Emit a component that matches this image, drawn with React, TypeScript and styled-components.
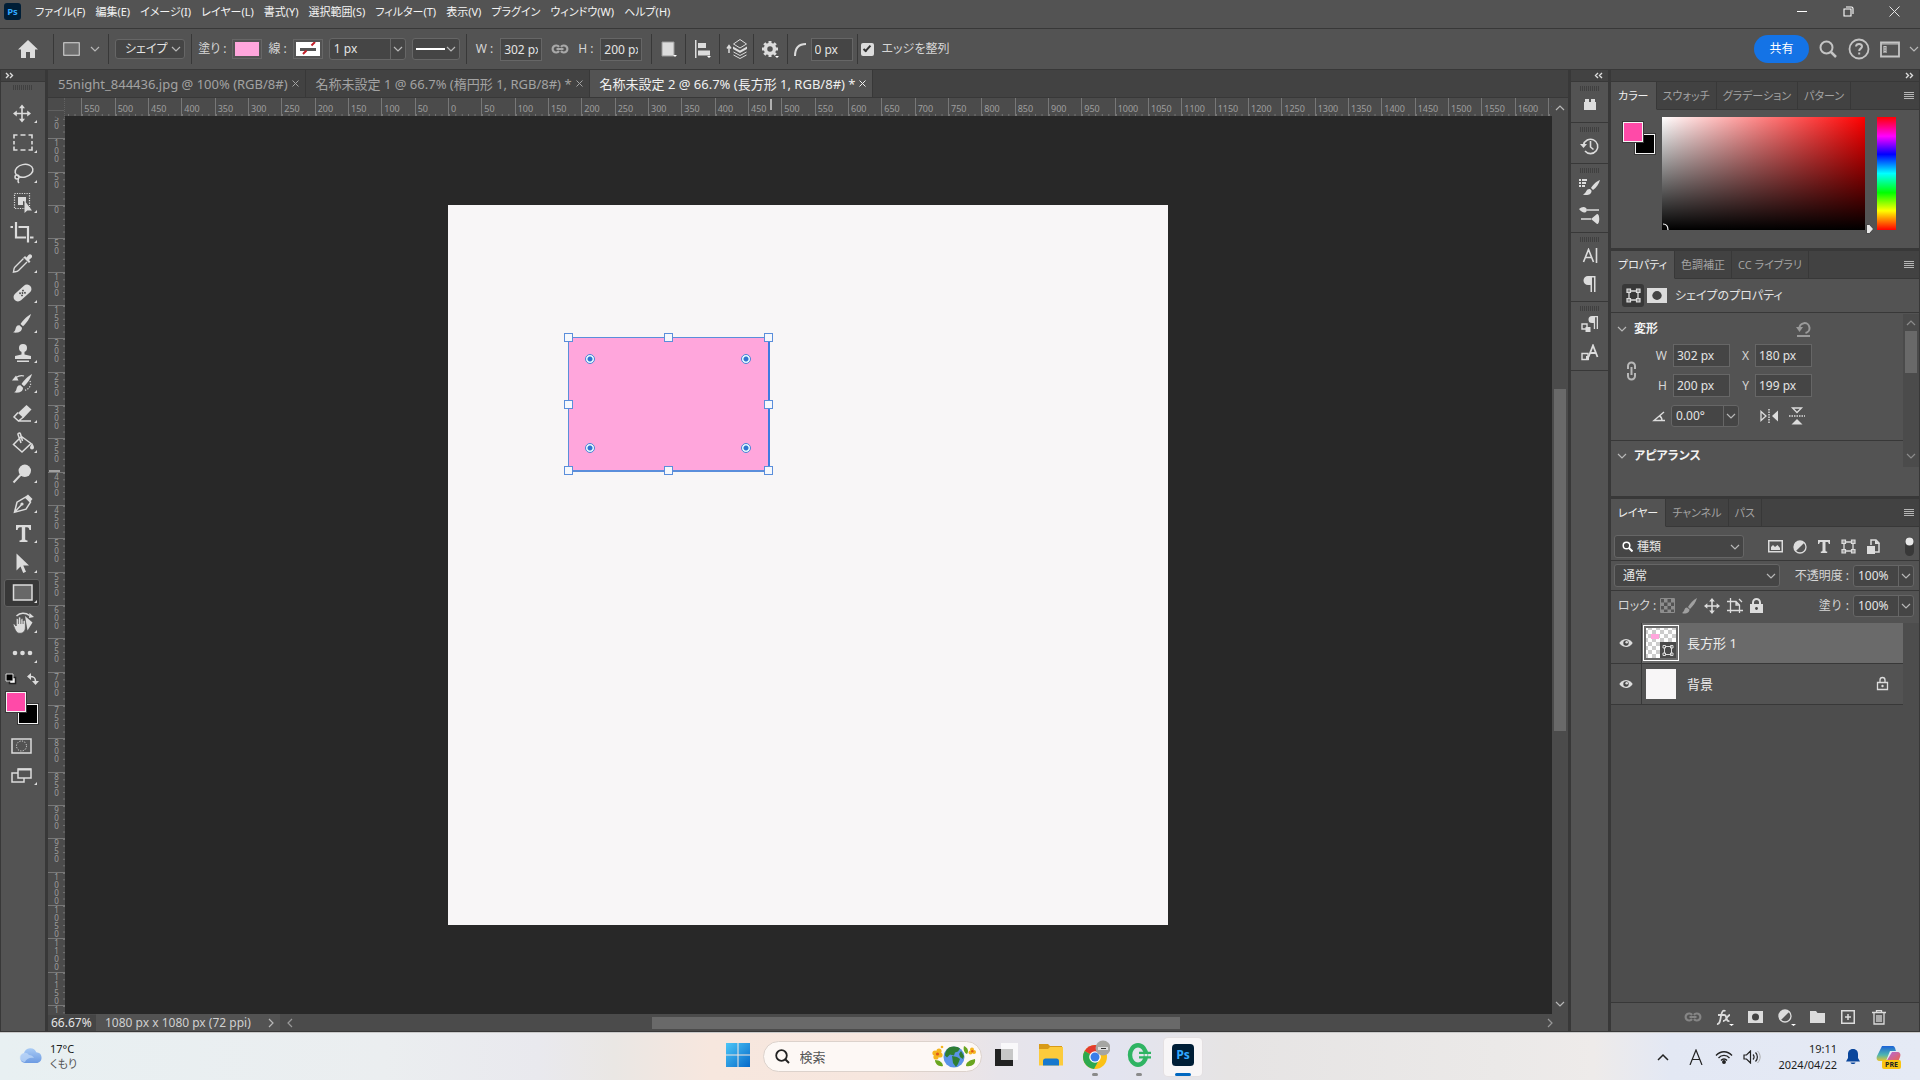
import React from "react";
import styled, { createGlobalStyle, css } from "styled-components";

const c = {
  panel: "#535353",
  dark: "#424242",
  line: "#383838",
  field: "#454545",
  edge: "#666666",
  text: "#e4e4e4",
  dim: "#a3a3a3",
  icon: "#dcdcdc",
  canvas: "#282828",
  track: "#4b4b4b",
  thumb: "#696969",
};

const Global = createGlobalStyle`
  *, *::before, *::after { box-sizing: border-box; }
  body {
    margin: 0;
    overflow: hidden;
    background: ${c.line};
    color: ${c.text};
    font: 12px/16px "Noto Sans", "Noto Sans CJK JP", sans-serif;
    font-feature-settings: "palt";
  }
  button, input, select { font: inherit; font-feature-settings: inherit; color: inherit; margin: 0; }
  button { border: 0; padding: 0; background: none; cursor: pointer; }
  svg { display: block; flex: none; }
`;

/* ---------- frame ---------- */

const Page = styled.div`
  display: grid;
  grid-template-rows: 28px 41px minmax(0, 1fr) 48px;
  height: 100vh;
`;

const MenuBar = styled.header`
  display: flex;
  align-items: center;
  background: ${c.panel};
  padding: 0 14px 5px 4px;
`;

const Menus = styled.nav`
  display: flex;
  gap: 10px;
  margin-left: 14px;
  flex: 1;
`;

const MenuItem = styled.button`
  white-space: nowrap;
  font-size: 11px;
  color: #f4f4f4;
`;

const WindowButtons = styled.div`
  display: flex;
  gap: 22px;
`;

const WindowButton = styled.button`
  width: 24px;
  height: 20px;
  display: grid;
  place-items: center;
`;

const OptionsBar = styled.div`
  display: flex;
  align-items: center;
  border-top: 1px solid ${c.line};
  background: ${c.panel};
  padding: 0 1px 0 3px;
  white-space: nowrap;
`;

const Group = styled.div<{ $w: number; $gap?: number }>`
  display: flex;
  align-items: center;
  justify-content: center;
  gap: ${(p) => p.$gap ?? 6}px;
  width: ${(p) => p.$w}px;
  height: 30px;
  flex: none;
  border-right: 1px solid ${c.line};
`;

const LastGroup = styled(Group)`
  border-right: 0;
`;

const Spacer = styled.div`
  flex: 1;
`;

const IconButton = styled.button<{ $w?: number; $h?: number }>`
  display: grid;
  place-items: center;
  width: ${(p) => p.$w ?? 20}px;
  height: ${(p) => p.$h ?? 20}px;
  flex: none;
`;

const fieldBox = css`
  background: ${c.field};
  border: 1px solid ${c.edge};
  color: ${c.text};
`;

const TextField = styled.input<{ $w: number }>`
  ${fieldBox}
  width: ${(p) => p.$w}px;
  height: 23px;
  padding: 0 3px;
  font-size: 12px;
  outline: 0;
`;

const Label = styled.label`
  color: #d6d6d6;
  white-space: nowrap;
`;

const WideLabel = styled(Label)`
  font-feature-settings: normal;
`;

const LockLabel = styled.span`
  padding-left: 4px;
  color: #d6d6d6;
  white-space: nowrap;
`;

const SelectWrap = styled.span<{ $w: number; $h: number }>`
  display: grid;
  align-items: center;
  width: ${(p) => p.$w}px;
  height: ${(p) => p.$h}px;
  flex: none;
  > * { grid-area: 1 / 1; }
  > svg { justify-self: end; margin-right: 4px; pointer-events: none; }
  > svg.lead { justify-self: start; margin-left: 8px; }
  > svg.line { justify-self: start; margin-left: 4px; }
`;

const SelectField = styled.select<{ $pad: number }>`
  ${fieldBox}
  appearance: none;
  width: 100%;
  height: 100%;
  border-radius: 3px;
  padding: 0 16px 0 ${(p) => p.$pad}px;
  outline: 0;
`;

const Combo = styled.span<{ $w: number }>`
  ${fieldBox}
  display: flex;
  width: ${(p) => p.$w}px;
  height: 22px;
  border-radius: 3px;
  flex: none;
  input {
    flex: 1;
    min-width: 0;
    background: none;
    border: 0;
    outline: 0;
    padding: 0 4px;
  }
  button {
    width: 15px;
    display: grid;
    place-items: center;
    border-left: 1px solid ${c.edge};
  }
`;

const Swatch = styled.button<{ $color: string }>`
  width: 30px;
  height: 20px;
  border: 1px solid ${c.edge};
  padding: 2px 2px;
  background: ${(p) => p.$color};
  background-clip: content-box;
  svg { width: 100%; height: 100%; }
`;

const Check = styled.input`
  appearance: none;
  width: 13px;
  height: 13px;
  border-radius: 2px;
  background: ${c.icon};
  display: grid;
  place-items: center;
  &:checked::after {
    content: "";
    width: 4px;
    height: 8px;
    border: solid #333;
    border-width: 0 2px 2px 0;
    transform: translateY(-1px) rotate(42deg);
  }
`;

const Share = styled.button`
  width: 55px;
  height: 28px;
  border-radius: 14px;
  background: #1473e6;
  color: #fff;
`;

const RightTools = styled.div`
  display: flex;
  align-items: center;
  gap: 8px;
`;

const Workspace = styled.main`
  display: grid;
  grid-template-columns: 45px minmax(0, 1fr) 37px 308px;
  gap: 3px;
  padding: 1px 1px 1px 0;
  background: ${c.line};
  min-height: 0;
`;

/* ---------- tools ---------- */

const Tools = styled.aside`
  display: flex;
  flex-direction: column;
  align-items: center;
  background: ${c.panel};
  border-left: 1px solid ${c.line};
  min-height: 0;
`;

const Strip = styled.div<{ $end?: boolean }>`
  width: 100%;
  height: 12px;
  flex: none;
  display: flex;
  align-items: center;
  justify-content: ${(p) => (p.$end ? "flex-end" : "flex-start")};
  padding: 0 5px 0 4px;
  background: ${c.dark};
  border-bottom: 1px solid ${c.line};
`;

const Grip = styled.div`
  width: 20px;
  height: 5px;
  margin: 3px auto 0;
  flex: none;
  background: repeating-linear-gradient(90deg, #404040 0 1px, transparent 1px 2px);
`;

const ToolBody = styled.div`
  display: flex;
  flex-direction: column;
  align-items: center;
  padding-right: 2px;
`;

const ToolList = styled.div`
  display: flex;
  flex-direction: column;
  gap: 2px;
  margin: 9px 0 6px;
`;

const ToolButton = styled.button<{ $on?: boolean }>`
  width: 36px;
  height: 28px;
  border-radius: 3px;
  ${(p) => p.$on && css`background: #383838; box-shadow: inset 0 0 0 1px #626262;`}
`;

const ColourPair = styled.div`
  display: grid;
  grid-template-columns: repeat(34, 1px);
  grid-template-rows: repeat(34, 1px);
  margin: 6px 0 4px;
`;

const Chip = styled.button<{ $color: string; $back?: boolean }>`
  grid-area: ${(p) => (p.$back ? "13 / 13 / 35 / 35" : "1 / 1 / 23 / 23")};
  width: 22px;
  height: 22px;
  background: ${(p) => p.$color};
  border: 1px solid ${c.line};
  box-shadow: inset 0 0 0 1px #f4f4f4;
`;

const MiniRow = styled.div`
  display: flex;
  justify-content: space-between;
  width: 34px;
`;

/* ---------- document ---------- */

const Doc = styled.section`
  display: grid;
  grid-template-rows: 28px 18px minmax(0, 1fr) 17px;
  min-width: 0;
  min-height: 0;
  background: ${c.dark};
`;

const DocTabs = styled.div`
  display: flex;
  border-bottom: 1px solid ${c.line};
`;

const DocTab = styled.div<{ $on?: boolean }>`
  display: flex;
  align-items: center;
  gap: 4px;
  padding: 0 6px 0 10px;
  white-space: nowrap;
  border-right: 1px solid ${c.line};
  color: ${(p) => (p.$on ? "#f0f0f0" : c.dim)};
  background: ${(p) => (p.$on ? c.panel : "transparent")};
  > button:first-child { font-size: 13px; }
`;

const RulerRow = styled.div`
  display: grid;
  grid-template-columns: 17px minmax(0, 1fr) 16px;
  background: ${c.track};
`;

const Corner = styled.div`
  border-right: 1px dotted #6a6a6a;
  background: linear-gradient(#6a6a6a, #6a6a6a) 0 12px / 100% 1px no-repeat, ${c.track};
  opacity: 0.7;
`;

const RulerWindow = styled.div`
  overflow: hidden;
  min-height: 0;
  background: ${c.track};
  color: #9e9e9e;
  font-size: 9px;
  font-feature-settings: normal;
`;

const HScale = styled.div`
  display: grid;
  grid-template-columns: repeat(48, 1fr);
  width: 1600px;
  height: 18px;
  margin-left: -17px;
`;

const HCell = styled.span<{ $mark?: boolean }>`
  border-left: 1px solid #777;
  padding: 5px 0 0 2px;
  line-height: 12px;
  background: ${(p) => p.$mark && "linear-gradient(#b0b0b0, #b0b0b0) 21px 1px / 2px 11px no-repeat,"}
    linear-gradient(90deg, #777 1px, transparent 1px) 0 100% / 20% 2px repeat-x;
`;

const VScale = styled.div`
  display: grid;
  grid-template-rows: repeat(30, 1fr);
  height: 1000px;
  margin-top: -11px;
`;

const VCell = styled.span<{ $mark?: boolean }>`
  border-top: 1px solid #777;
  display: flex;
  flex-direction: column;
  align-items: center;
  line-height: 8px;
  font-size: 8px;
  overflow: hidden;
  background: ${(p) => p.$mark && "linear-gradient(#a0a0a0, #a0a0a0) 1px 31px / 11px 2px no-repeat,"}
    linear-gradient(#777 1px, transparent 1px) 100% 0 / 2px 20% repeat-y;
`;

const Stage = styled.div`
  display: grid;
  grid-template-columns: 17px minmax(0, 1fr) 16px;
  min-height: 0;
`;

const Canvas = styled.div`
  display: grid;
  place-items: center;
  padding-right: 1px;
  background: ${c.canvas};
  overflow: hidden;
`;

const Artboard = styled.div`
  position: relative;
  width: 720px;
  height: 720px;
  background: #f8f6f7;
`;

const Shape = styled.div`
  position: absolute;
  left: 120px;
  top: 132px;
  width: 200px;
  height: 133px;
  background: #ffa6dc;
  box-shadow: inset 1px 1px #5b8edb, 2px 0 #3f7be0, 0 2px #5b8edb, 2px 2px #3f7be0;
`;

const Handle = styled.span<{ $x: number; $y: number }>`
  position: absolute;
  left: ${(p) => p.$x}%;
  top: ${(p) => p.$y}%;
  width: 9px;
  height: 9px;
  margin: -4px;
  background: #f6f8fc;
  border: 1px solid #5b8edb;
`;

const Dot = styled.span<{ $x: string; $y: string }>`
  position: absolute;
  ${(p) => p.$x}: 17px;
  ${(p) => p.$y}: 17px;
  width: 10px;
  height: 10px;
  border-radius: 50%;
  border: 1px solid #4a86d8;
  background: radial-gradient(circle, #2f74cf 0 2px, #e9fbff 3px);
`;

const VBar = styled.div`
  display: flex;
  flex-direction: column;
  align-items: center;
  background: ${c.track};
  padding: 5px 0;
`;

const VThumb = styled.div`
  width: 12px;
  flex: 342;
  background: ${c.thumb};
`;

const VGap = styled.div`
  flex: 268;
`;

const Status = styled.footer`
  display: flex;
  align-items: center;
  background: ${c.track};
  white-space: nowrap;
`;

const Zoom = styled.input`
  width: 48px;
  height: 16px;
  border: 0;
  outline: 0;
  padding: 0 0 0 3px;
  background: ${c.field};
`;

const DocInfo = styled.div`
  display: flex;
  align-items: center;
  justify-content: space-between;
  width: 184px;
  height: 17px;
  padding: 0 4px 0 9px;
  background: ${c.panel};
  color: #d0d0d0;
`;

const HBar = styled.div`
  flex: 1;
  display: grid;
  grid-template-columns: 15px 352fr 527fr 352fr 36px;
  align-items: center;
  padding-left: 5px;
  svg:last-child { justify-self: center; }
`;

const HThumb = styled.div`
  grid-column: 3;
  height: 12px;
  background: ${c.thumb};
`;

/* ---------- dock ---------- */

const Dock = styled.aside`
  background: ${c.panel};
  min-height: 0;
`;

const DockGroup = styled.div`
  border-bottom: 1px solid ${c.line};
  padding: 1px 0 3px;
  button { width: 37px; height: 28px; display: grid; place-items: center; }
`;

/* ---------- panels ---------- */

const Panels = styled.aside`
  display: flex;
  flex-direction: column;
  min-height: 0;
  background: ${c.line};
`;

const Panel = styled.section<{ $h?: number }>`
  display: flex;
  flex-direction: column;
  background: ${c.panel};
  margin-bottom: 3px;
  min-height: 0;
  ${(p) => (p.$h ? css`height: ${p.$h}px; flex: none;` : css`flex: 1; margin-bottom: 0;`)}
`;

const PanelTabs = styled.div`
  display: flex;
  height: 28px;
  flex: none;
  background: ${c.dark};
`;

const PanelTab = styled.button<{ $on?: boolean }>`
  padding: 0 ${(p) => (p.$on ? 7 : 6)}px;
  font-size: 11px;
  white-space: nowrap;
  border-right: 1px solid ${c.line};
  border-bottom: 1px solid ${(p) => (p.$on ? c.panel : c.line)};
  background: ${(p) => (p.$on ? c.panel : "transparent")};
  color: ${(p) => (p.$on ? "#efefef" : c.dim)};
`;

const TabRest = styled.div`
  flex: 1;
  display: flex;
  align-items: center;
  justify-content: flex-end;
  padding-right: 5px;
  border-bottom: 1px solid ${c.line};
`;

const ColourBody = styled.div`
  display: grid;
  grid-template-columns: 34px 203px 1fr 19px;
  column-gap: 3px;
  padding: 7px 23px 0 11px;
  align-items: start;
  ${ColourPair} { margin: 4px 0 0; }
`;

const Field = styled.div`
  margin-left: 3px;
  width: 203px;
  height: 113px;
  background: linear-gradient(to top, #000, transparent), linear-gradient(to right, #fff, #f00);
  display: flex;
  align-items: flex-end;
`;

const Hue = styled.div`
  height: 113px;
  width: 19px;
  background: linear-gradient(#f00, #f0f 17%, #00f 33%, #0ff 50%, #0f0 67%, #ff0 83%, #f00);
`;

const HuePointer = styled.div`
  align-self: end;
  justify-self: end;
  margin-bottom: -4px;
`;

const PropHead = styled.div`
  display: flex;
  align-items: center;
  gap: 3px;
  height: 34px;
  padding-left: 11px;
  border-bottom: 1px solid ${c.line};
  color: ${c.text};
  span { margin-left: 5px; }
`;

const Pressed = styled.button`
  width: 22px;
  height: 23px;
  border-radius: 3px;
  background: #383838;
  display: grid;
  place-items: center;
`;

const PropBody = styled.div`
  display: grid;
  grid-template-columns: minmax(0, 1fr) 16px;
  flex: 1;
  padding-top: 1px;
`;

const Section = styled.div`
  border-bottom: 1px solid ${c.line};
  height: 127px;
`;

const Heading = styled.h3`
  display: flex;
  align-items: center;
  gap: 7px;
  margin: 0;
  height: 30px;
  padding: 0 92px 0 6px;
  font-size: 12px;
  font-weight: 700;
  color: #f2f2f2;
  svg:last-child:not(:first-child) { margin-left: auto; }
`;

const TransformGrid = styled.div`
  display: grid;
  grid-template-columns: 20px 15px 57px 13px 57px;
  grid-template-rows: 23px 23px 24px;
  column-gap: 6px;
  row-gap: 7px;
  padding-left: 15px;
  align-items: center;
  label { text-align: right; }
  > button { grid-row: 1 / 3; }
`;

const AngleRow = styled.div`
  grid-column: 2 / 6;
  display: flex;
  align-items: center;
  gap: 5px;
  padding-right: 5px;
  button + button { margin-left: 3px; }
`;

const PropScroll = styled.div`
  height: 153px;
  display: flex;
  flex-direction: column;
  align-items: center;
  background: ${c.track};
  padding: 4px 0 6px;
  div { width: 12px; height: 42px; background: ${c.thumb}; margin: 3px 0 auto; }
`;

const LayerRow = styled.div<{ $h: number }>`
  display: flex;
  align-items: center;
  height: ${(p) => p.$h}px;
  padding: 0 5px 0 3px;
  gap: 4px;
  flex: none;
`;

const FilterRow = styled(LayerRow)`
  padding-top: 6px;
`;

const BlendRow = styled(LayerRow)`
  border-top: 1px solid ${c.line};
`;

const LockRow = styled(LayerRow)`
  border-top: 1px solid ${c.line};
  padding-bottom: 3px;
`;

const IconRow = styled.div<{ $gap: number }>`
  display: flex;
  align-items: center;
  gap: ${(p) => p.$gap}px;
`;

const LayerList = styled.ul`
  list-style: none;
  margin: 0;
  padding: 0 16px 0 0;
  flex: 1;
  background: #4d4d4d;
  border-bottom: 1px solid ${c.line};
`;

const Layer = styled.li<{ $on?: boolean }>`
  display: grid;
  grid-template-columns: 30px minmax(0, 1fr);
  height: 41px;
  border-bottom: 1px solid ${c.line};
  background: ${c.panel};
  > div {
    display: flex;
    align-items: center;
    gap: 8px;
    padding-left: 1px;
    border-left: 1px solid ${c.line};
    background: ${(p) => (p.$on ? "#6a6a6a" : c.panel)};
    color: #ececec;
    font-size: 13px;
  }
  > div > svg { margin: 0 13px 0 auto; }
  > button { display: grid; place-items: center; }
`;

const Thumb = styled.span<{ $on?: boolean }>`
  display: flex;
  align-items: flex-end;
  justify-content: flex-end;
  width: 36px;
  height: 36px;
  flex: none;
  padding: 2px;
  border: 1px solid ${(p) => (p.$on ? "#fff" : "transparent")};
  background-clip: content-box;
  background-color: #f8f6f7;
  ${(p) => p.$on && css`
    background-image: linear-gradient(#ffa6dc, #ffa6dc), conic-gradient(#ccc 25%, #fff 0 50%, #ccc 0 75%, #fff 0);
    background-size: 8px 5px, 8px 8px;
    background-position: 7px 8px, 0 0;
    background-repeat: no-repeat, repeat;
  `}
`;

const PanelFoot = styled.footer`
  display: flex;
  align-items: center;
  justify-content: flex-end;
  gap: 11px;
  height: 28px;
  padding-right: 30px;
  flex: none;
`;

/* ---------- taskbar ---------- */

const Taskbar = styled.footer`
  display: grid;
  grid-template-columns: 1fr auto 1fr;
  align-items: center;
  color: #1c1c1c;
  border-top: 1px solid #c9c9c9;
  background: linear-gradient(90deg, #e8f0f2 0, #ebeef0 20%, #e9e9ee 28%, #eae7e4 32%, #f7e7de 37%, #f6e6de 46%, #e7e4ea 52%, #e3e4f0 58%, #e6e4e4 64%, #ebe9e8 78%, #eeebea 83%, #e3e8f4 87%, #e5eaf5 100%);
`;

const Weather = styled.button`
  display: flex;
  align-items: center;
  gap: 7px;
  padding: 0 0 2px 19px;
  text-align: left;
  font-size: 11px;
  line-height: 15px;
  small { display: block; font-size: 11px; color: #555; }
`;

const Apps = styled.div`
  display: flex;
  align-items: center;
  gap: 6px;
`;

const AppButton = styled.button<{ $on?: boolean }>`
  display: grid;
  grid-template-rows: 1fr 3px;
  place-items: center;
  width: 38px;
  height: 38px;
  border-radius: 4px;
  ${(p) => p.$on && css`background: #f8f6f7; box-shadow: 0 0 0 1px #e4e0e2;`}
`;

const Running = styled.i<{ $on?: boolean }>`
  width: ${(p) => (p.$on ? 16 : 6)}px;
  height: 3px;
  border-radius: 2px;
  background: ${(p) => (p.$on ? "#0067c0" : "#8a8a8a")};
`;

const Search = styled.label`
  display: flex;
  align-items: center;
  gap: 10px;
  width: 219px;
  height: 31px;
  padding: 0 5px 0 11px;
  border: 1px solid #dcd2cc;
  border-radius: 16px;
  background: #fdf8f5;
  input { flex: 1; min-width: 0; border: 0; outline: 0; background: none; padding: 0; font-size: 13px; }
  input::placeholder { color: #555; opacity: 1; }
`;

const Tray = styled.div`
  display: flex;
  align-items: center;
  justify-content: flex-end;
  padding-right: 18px;
  gap: 8px;
  > button:first-child { margin-right: 8px; }
  > button:last-child { margin-left: 7px; }
`;

const Clock = styled.time`
  text-align: right;
  font-size: 11px;
  line-height: 16px;
  margin-left: 8px;
`;

/* ---------- icons ---------- */

type Ic = { w: number; h: number; children: React.ReactNode; className?: string; stroke?: boolean; color?: string };
const Svg = ({ w, h, children, className, stroke, color = c.icon }: Ic) => (
  <svg
    width={w}
    height={h}
    viewBox={`0 0 ${w} ${h}`}
    className={className}
    fill={stroke ? "none" : color}
    stroke={stroke ? color : "none"}
    strokeWidth={stroke ? 1.5 : undefined}
    aria-hidden="true"
  >
    {children}
  </svg>
);

const Chevron = ({ dir = "down", color = "#b8b8b8" }: { dir?: "down" | "up" | "left" | "right"; color?: string }) => {
  const d = { down: "M1 3l4 4 4-4", up: "M1 7l4-4 4 4", left: "M7 1L3 5l4 4", right: "M3 1l4 4-4 4" }[dir];
  return <Svg w={10} h={10} stroke color={color}><path d={d} strokeWidth="1.2" /></Svg>;
};

const Doubles = ({ left }: { left?: boolean }) => (
  <Svg w={9} h={7} stroke><path strokeWidth="1.4" d={left ? "M4 1L1.500 3.500 4 6M8 1L5.500 3.500 8 6" : "M1 1l2.500 2.500L1 6M5 1l2.500 2.500L5 6"} /></Svg>
);

const Burger = () => <Svg w={10} h={8}><path d="M0 0h10v1H0zM0 2h10v1H0zM0 4h10v1H0zM0 6h10v1H0z" fill="#b5b5b5" /></Svg>;

const Link = ({ color = "#a8a8a8" }: { color?: string }) => (
  <Svg w={18} h={12} stroke color={color}>
    <path strokeWidth="2.2" d="M8 4a3.500 3.500 0 1 0 0 4M10 4a3.500 3.500 0 1 1 0 4M5.500 6h7" />
  </Svg>
);

const Close = ({ s = 7 }: { s?: number }) => (
  <Svg w={s} h={s} stroke color="currentColor"><path strokeWidth="1" d={`M.5 .5L${s - 0.5} ${s - 0.5}M${s - 0.5} .5L.5 ${s - 0.5}`} /></Svg>
);

const MoveIcon = ({ s = 16 }: { s?: number }) => (
  <svg width={s} height={s} viewBox="0 0 18 18" fill={c.icon} aria-hidden="true">
    <path d="M9 0l3.200 3.800H9.900v4.300h4.300V5.800L18 9l-3.800 3.200V9.900H9.900v4.300h2.300L9 18l-3.200-3.800h2.300V9.900H3.800v2.300L0 9l3.800-3.200v2.300h4.300V3.800H5.800z" />
  </svg>
);

const PathBox = ({ s = 15 }: { s?: number }) => (
  <svg width={s} height={s} viewBox="0 0 15 15" fill="none" stroke={c.icon} aria-hidden="true">
    <path strokeWidth="1.300" d="M3 4.500v6M12 4.500v6M4.500 3h6M4.500 12h6" />
    <path strokeWidth="1.200" fill={c.icon} fillOpacity=".55" d="M1 1h3.500v3.500H1zM10.500 1H14v3.500h-3.500zM1 10.500h3.500V14H1zM10.500 10.500H14V14h-3.500z" />
  </svg>
);

const MaskIcon = ({ w = 15 }: { w?: number }) => (
  <svg width={w} height={w === 20 ? 15 : 12} viewBox="0 0 20 16" preserveAspectRatio="none" aria-hidden="true">
    <path fill={c.icon} d="M0 0h20v16H0z" /><circle cx="10" cy="8" r="4.700" fill="#444" />
  </svg>
);

const HalfCircle = () => (
  <Svg w={14} h={14}><circle cx="7" cy="7" r="6" fill="none" stroke={c.icon} strokeWidth="1.300" /><path d="M11.300 2.700A6 6 0 0 0 2.700 11.300z" /></Svg>
);

const BrushShape = () => (
  <>
    <path d="M27 5c-3 1.500-8 6-10.500 10l2.500 2.300C22.500 14 26 9 27 5z" />
    <path d="M15.500 16.200c-3-.2-3.600 1.800-4 3.800-.3 1.600-1 2.600-2.500 3.300 3.500 1 9 .3 9-4.500z" />
  </>
);

const toolArt: [string, React.ReactNode][] = [
  ["移動", <g transform="translate(9 5.500)"><path d="M9 0l3 3.800H9.800v4.400h4.400V6L18 9l-3.800 3V9.800H9.800v4.400H12L9 18l-3-3.800h2.200V9.800H3.800V12L0 9l3.800-3v2.200h4.400V3.800H6z" /></g>],
  ["選択", <path fill="none" stroke={c.icon} strokeWidth="1.600" d="M10 9.500V6h3.500M16.500 6h5M24.500 6H28v3.500M28 12v3.500M28 17.500V21h-3.500M21.500 21h-5M13.500 21H10v-3.500M10 15.500V12" />],
  ["なげなわ", <g fill="none" stroke={c.icon} strokeWidth="1.500"><ellipse cx="20" cy="11.800" rx="9" ry="6.300" transform="rotate(-12 20 11.800)" /><circle cx="13" cy="18" r="2" /><path d="M14 19c1.500 1.500-1.500 2.500 1 5" /></g>],
  ["オブジェクト選択", <><path fill="none" stroke={c.icon} strokeWidth="1.200" strokeDasharray="1.200 1.200" d="M10.500 4.500h15v15h-15z" /><path d="M14 8h8v5l-3-1v4h-5z" /><path d="M20.500 11.500V24l2.800-2.600H28z" /></>],
  ["切り抜き", <path fill="none" stroke={c.icon} strokeWidth="2.200" d="M12 3v15.500h10M26 18.500h3.500M6.500 8H9M14.500 8H24v15.500" />],
  ["スポイト", <><path d="M20 8l1-1 1.500 1.500 2-2.500c2-2 4.800.8 3 2.800l-2.500 2.200L26.500 12.500l-1.500 1.500-6-6z" /><path fill="none" stroke={c.icon} strokeWidth="1.400" d="M19.500 9.500l-8.500 8.500c-1.500 1.500-1 3-1.500 5 2-.5 3.500 0 5-1.500l8.500-8.500" /></>],
  ["修復ブラシ", <g transform="rotate(-42 18.500 14)"><rect x="8" y="9.500" width="21" height="9" rx="4.500" /><g fill="#444"><circle cx="16.500" cy="12.500" r=".9" /><circle cx="20.500" cy="12.500" r=".9" /><circle cx="16.500" cy="15.500" r=".9" /><circle cx="20.500" cy="15.500" r=".9" /><circle cx="18.500" cy="14" r=".9" /></g></g>],
  ["ブラシ", <BrushShape />],
  ["スタンプ", <><circle cx="19" cy="9" r="4" /><path d="M17.500 11h3v4.500l6.500 1.500v3H11v-3l6.500-1.500zM13 21.500h12v1.500H13z" /></>],
  ["ヒストリーブラシ", <><g transform="translate(1 0)"><BrushShape /></g><path d="M8 11.500l4-5 2.500 5z" /><path fill="none" stroke={c.icon} strokeWidth="1.200" d="M12 8.500c3-2 5-2.500 8-1.500" /><path fill="none" stroke={c.icon} strokeWidth="1.200" strokeDasharray="1.200 1.500" d="M26 12c2 4-1 9-6.500 9.500" /></>],
  ["消しゴム", <><path d="M22.500 6l5 4.500-8 8.500-5.500-5z" /><path fill="none" stroke={c.icon} strokeWidth="1.500" d="M14 13.500L10 18l4.500 4 5-4M14.500 22H27" /></>],
  ["塗りつぶし", <><path fill="none" stroke={c.icon} strokeWidth="1.500" d="M17.500 7.500l9.500 7-9 8.500-8.500-7.500zM17 14L14 5.500c-.5-1.500 2-2 2.500-.5l2 7" /><path d="M28 14c1.500 2.500 2 3.500 2 4.500a2 2 0 0 1-4 0c0-1 1-2.500 2-4.500z" /></>],
  ["覆い焼き", <><circle cx="20.800" cy="11.800" r="6.200" /><path fill="none" stroke={c.icon} strokeWidth="2" d="M17 15.500L9.500 23.500" /></>],
  ["ペン", <><path fill="none" stroke={c.icon} strokeWidth="1.500" d="M10.500 23.200l2.500-10 8.500-5 5 5-4.500 7zM10.500 23.200l7-7.500" /><circle cx="18" cy="15" r="1.600" /><path d="M21.500 7.500L24 5.500l4.500 4.500-2.500 3z" /></>],
  ["文字", <path d="M12 6h15v5h-1.600c-.3-2-.8-2.800-2.400-2.800h-1.800v11.600c0 1.200.4 1.600 2.300 1.700V23h-8v-1.500c1.900-.1 2.300-.5 2.300-1.700V8.200H16c-1.600 0-2.100.8-2.400 2.800H12z" />],
  ["パス選択", <path d="M12.500 4.500v17l4-4 2.700 6.500 2.800-1.200-2.700-6.300H25z" />],
  ["長方形", <rect x="9.500" y="6" width="18.500" height="15" fill="#686868" stroke={c.icon} strokeWidth="1.500" />],
  ["ビュー回転", <><path d="M21 7l7.500 6.500-5 8z" /><path d="M25 9l5-1-4.500-4z" /><path fill="none" stroke={c.icon} strokeWidth="1.500" d="M12.500 7c3.500-3.500 9-3.500 13-.5" /><path stroke="#535353" strokeWidth=".8" d="M9 15.500c1-1.200 2 0 3.200 1.500V10.500c0-1.500 2-1.500 2.200 0V9c.3-1.500 2.300-1.500 2.400 0v1.500c.3-1.400 2.300-1.200 2.300.2V12c.5-1.200 2.300-.8 2.300.6v5.400c0 4-2 6.300-5.400 6.300-4 0-4.500-3-7-8.800z" /><path stroke="#535353" strokeWidth=".8" d="M14.400 10.500V15M16.800 10.500V15M19.100 11.500V15" /></>],
  ["その他", <><circle cx="11" cy="14" r="2.300" /><circle cx="18.500" cy="14" r="2.300" /><circle cx="26" cy="14" r="2.300" /></>],
];

const PsLogo = ({ s }: { s: number }) => (
  <svg width={s} height={s} viewBox="0 0 20 20" aria-hidden="true">
    <rect width="20" height="20" rx="3.500" fill="#001e36" />
    <text x="10" y="14" textAnchor="middle" fontFamily="Open Sans, sans-serif" fontSize="11" fontWeight="700" fill="#31a8ff">Ps</text>
  </svg>
);

const menus = ["ファイル(F)", "編集(E)", "イメージ(I)", "レイヤー(L)", "書式(Y)", "選択範囲(S)", "フィルター(T)", "表示(V)", "プラグイン", "ウィンドウ(W)", "ヘルプ(H)"];

const docs = [
  "55night_844436.jpg @ 100% (RGB/8#)",
  "名称未設定 1 @ 66.7% (楕円形 1, RGB/8#) *",
  "名称未設定 2 @ 66.7% (長方形 1, RGB/8#) *",
];

const Select = ({ w, h, pad = 8, label, value, lead }: { w: number; h: number; pad?: number; label: string; value: string; lead?: React.ReactNode }) => (
  <SelectWrap $w={w} $h={h}>
    <SelectField $pad={pad} aria-label={label}><option>{value}</option></SelectField>
    {lead}
    <Chevron />
  </SelectWrap>
);

const ComboBox = ({ w, id, value, label }: { w: number; id: string; value: string; label: string }) => (
  <Combo $w={w}>
    <input id={id} defaultValue={value} aria-label={label} />
    <button aria-label={`${label}の一覧`}><Chevron /></button>
  </Combo>
);

const Options = () => (
  <OptionsBar>
    <Group $w={51}>
      <IconButton aria-label="ホーム"><Svg w={20} h={18}><path d="M10 0l10 9.500h-3V18h-5v-6H8v6H3V9.500H0z" /></Svg></IconButton>
    </Group>
    <Group $w={55} $gap={10}>
      <IconButton $w={18} aria-label="長方形ツール"><Svg w={17} h={14}><rect x=".75" y=".75" width="15.500" height="12.500" fill="#6e6e6e" stroke={c.icon} /></Svg></IconButton>
      <Chevron />
    </Group>
    <Group $w={83}><Select w={70} h={20} pad={9} label="ツールモード" value="シェイプ" /></Group>
    <Group $w={275} $gap={6}>
      <Label htmlFor="fill">塗り :</Label>
      <Swatch id="fill" $color="#ffa6dc" aria-label="塗り" />
      <Label htmlFor="stroke">線 :</Label>
      <Swatch id="stroke" $color="#fff" aria-label="線">
        <svg viewBox="0 0 24 14"><path d="M4 6h16v3H4z" fill="#555" /><path d="M19 0L5 14" stroke="#c3202a" strokeWidth="2" strokeDasharray="5 7" /></svg>
      </Swatch>
      <ComboBox w={77} id="sw" value="1 px" label="線の幅" />
      <SelectWrap $w={48} $h={22}>
        <SelectField $pad={4} aria-label="線の種類" />
        <Svg className="line" w={29} h={2}><path d="M0 0h29v2H0z" fill="#fff" /></Svg>
        <Chevron />
      </SelectWrap>
    </Group>
    <Group $w={185} $gap={7}>
      <Label htmlFor="ow">W :</Label>
      <TextField id="ow" $w={42} defaultValue="302 px" />
      <IconButton $w={22} aria-label="縦横比を固定"><Link /></IconButton>
      <Label htmlFor="oh">H :</Label>
      <TextField id="oh" $w={42} defaultValue="200 px" />
    </Group>
    <Group $w={34}><IconButton aria-label="パスの操作"><Svg w={17} h={16}><path d="M2 1h12v14H2z" stroke="#999" /><path d="M13 14h4l-2 2z" fill="#fff" /></Svg></IconButton></Group>
    <Group $w={34}><IconButton aria-label="パスの整列"><Svg w={18} h={18}><path d="M1 0h1.500v18H1zM4 3h8v5H4zM4 10.500h12v5H4z" /><path d="M13 16h4l-2 2z" fill="#fff" /></Svg></IconButton></Group>
    <Group $w={34}><IconButton $w={22} aria-label="パスの配置"><Svg w={22} h={20}><path d="M3 14V8M1 9.500L3 6.500 5 9.500" fill="none" stroke={c.icon} strokeWidth="1.500" /><path d="M14 .5l6.500 4.500L14 9 7.500 5z" fill="none" stroke={c.icon} /><path d="M7 7.500l7 4 7-4v2.500l-7 4-7-4z" /><path d="M7.500 13l6.500 3.500 6.500-3.500M7.500 16l6.500 3.500 6.500-3.500" fill="none" stroke={c.icon} /></Svg></IconButton></Group>
    <Group $w={34}><IconButton aria-label="設定"><Svg w={19} h={18}><circle cx="9" cy="9" r="4.500" fill="none" stroke={c.icon} strokeWidth="3.500" /><path d="M9 1v3M9 14v3M1 9h3M14 9h3M3.300 3.300l2 2M12.700 12.700l2 2M3.300 14.700l2-2M12.700 5.300l2-2" stroke={c.icon} strokeWidth="3" /><path d="M14 16h4l-2 2z" fill="#fff" /></Svg></IconButton></Group>
    <Group $w={70} $gap={4}>
      <Svg w={14} h={14} stroke><path strokeWidth="2" d="M2 14C2 6 6 2 13 2" /></Svg>
      <TextField $w={42} defaultValue="0 px" aria-label="角丸の半径" />
    </Group>
    <LastGroup $w={94} $gap={8}>
      <Check type="checkbox" id="snap" defaultChecked />
      <Label htmlFor="snap">エッジを整列</Label>
    </LastGroup>
    <Spacer />
    <RightTools>
      <Share>共有</Share>
      <IconButton $w={22} aria-label="検索"><Svg w={18} h={18} stroke color="#c4c4c4"><circle cx="7.500" cy="7.500" r="6" strokeWidth="2" /><path d="M12 12l5 5" strokeWidth="2.500" /></Svg></IconButton>
      <IconButton $w={24} $h={24} aria-label="ヘルプ"><Svg w={22} h={22} stroke color="#c4c4c4"><circle cx="11" cy="11" r="9.500" strokeWidth="1.800" /><path strokeWidth="2" d="M8 8.500c.3-3.500 6-3.300 6 0 0 2-2.800 2.300-2.800 4.500M11.200 14.500v2" /></Svg></IconButton>
      <IconButton $w={22} aria-label="ワークスペース"><Svg w={20} h={17} stroke color="#c4c4c4"><path d="M1 1.500h18v14H1z" strokeWidth="1.800" /><path strokeWidth="1.200" d="M1 3h18M4 5v7M6 5v7M4 5.500h2M4 8h2M4 10.500h2" /></Svg></IconButton>
      <Chevron />
    </RightTools>
  </OptionsBar>
);

const ToolPanel = () => (
  <Tools aria-label="ツール">
    <Strip><Doubles /></Strip>
    <Grip />
    <ToolBody>
      <ToolList>
        {toolArt.map(([name, art]) => (
          <ToolButton key={name} $on={name === "長方形"} aria-label={name}>
            <Svg w={36} h={28}>{art}<path d="M33 21v3h-3z" /></Svg>
          </ToolButton>
        ))}
      </ToolList>
      <MiniRow>
        <button aria-label="初期設定の色"><Svg w={12} h={12}><path d="M4.500 4.500h6v6h-6z" fill="#fff" stroke="#222" strokeWidth="1.500" /><path d="M1 1h7v7H1z" fill="#000" stroke={c.icon} /></Svg></button>
        <button aria-label="色の入れ替え"><Svg w={12} h={12}><path d="M0 3.500L4 0v7zM8.500 12L5 8h7z" /><path d="M3 3.500c4 0 5.500 1 5.500 5" fill="none" stroke={c.icon} strokeWidth="1.600" /></Svg></button>
      </MiniRow>
      <ColourPair>
        <Chip $color="#000" $back aria-label="背景色" />
        <Chip $color="#ff4aa8" aria-label="描画色" />
      </ColourPair>
      <ToolButton aria-label="クイックマスク">
        <Svg w={36} h={28}><path d="M8 10h19v14H8z" fill="none" stroke={c.icon} strokeWidth="1.500" /><circle cx="17.500" cy="17" r="5" fill="none" stroke={c.icon} strokeDasharray="1.200 1.400" /></Svg>
      </ToolButton>
      <ToolButton aria-label="スクリーンモード">
        <Svg w={36} h={28}><path d="M8 16h12v9H8z" fill="#535353" stroke={c.icon} strokeWidth="1.500" /><path d="M14 12h13v9H14z" fill="#535353" stroke={c.icon} strokeWidth="1.500" /><path d="M14 11.500h13v2H14zM33 25v3h-3z" /></Svg>
      </ToolButton>
    </ToolBody>
  </Tools>
);

const handles = [[0, 0], [50, 0], [100, 0], [0, 50], [100, 50], [0, 100], [50, 100], [100, 100]];
const hTicks = Array.from({ length: 48 }, (_, i) => i * 50 - 600);
const vTicks = Array.from({ length: 30 }, (_, i) => i * 50 - 150);

const Document = () => (
  <Doc>
    <DocTabs>
      {docs.map((name, i) => (
        <DocTab key={name} $on={i === 2}>
          <button>{name}</button>
          <button aria-label="閉じる"><Close /></button>
        </DocTab>
      ))}
    </DocTabs>
    <RulerRow>
      <Corner />
      <RulerWindow>
        <HScale>{hTicks.map((t) => <HCell key={t} $mark={t === 450}>{t > -600 && Math.abs(t)}</HCell>)}</HScale>
      </RulerWindow>
      <VBar><Chevron dir="up" /></VBar>
    </RulerRow>
    <Stage>
      <RulerWindow>
        <VScale>
          {vTicks.map((t) => (
            <VCell key={t} $mark={t === 350}>{String(Math.abs(t)).split("").map((d, i) => <span key={i}>{d}</span>)}</VCell>
          ))}
        </VScale>
      </RulerWindow>
      <Canvas>
        <Artboard>
          <Shape>
            {handles.map(([x, y]) => <Handle key={`${x}-${y}`} $x={x} $y={y} />)}
            <Dot $x="left" $y="top" /><Dot $x="right" $y="top" /><Dot $x="left" $y="bottom" /><Dot $x="right" $y="bottom" />
          </Shape>
        </Artboard>
      </Canvas>
      <VBar><VGap /><VThumb /><VGap /><Chevron /></VBar>
    </Stage>
    <Status>
      <Zoom defaultValue="66.67%" aria-label="ズーム" />
      <DocInfo><span>1080 px x 1080 px (72 ppi)</span><Chevron dir="right" /></DocInfo>
      <HBar><Chevron dir="left" color="#999" /><HThumb /><i /><Chevron dir="right" color="#999" /></HBar>
    </Status>
  </Doc>
);

const dock: [string, React.ReactNode][][] = [
  [["プラグイン", <Svg w={12} h={12}><path d="M0 3h1V0h4v3h2V0h4v3h1v8H0z" /></Svg>]],
  [["ヒストリー", <Svg w={20} h={18} stroke><path strokeWidth="1.600" d="M3.500 8a7.200 7.200 0 1 1 1.500 6M10.500 4v6l3 2.500" /><path d="M0 7l3.500 4L7 7z" fill={c.icon} stroke="none" /></Svg>]],
  [
    ["ブラシ設定", <Svg w={22} h={18}><path d="M0 1h2v2H0zM3 1h5v2H3zM0 4h2v2H0zM3 4h4v2H3zM0 7h2v2H0zM3 7h3v2H3zM21 2c-3 1-7 4.500-9 8l2 2c3.500-2.500 6-6.500 7-10zM11 11c-4-.5-3 3.500-7 5.500 4 1.500 9 0 8.500-4z" /></Svg>],
    ["ブラシ", <Svg w={22} h={18}><path d="M0 3c3-2.500 7-3 8 1-1 4-5 3-8-1zM8 3.200h12v1.600H8zM2 12.200h10v1.600H2zM12 13l6-5c3-1 3 11 0 10z" /></Svg>],
  ],
  [
    ["文字", <Svg w={16} h={16} stroke><path strokeWidth="1.600" d="M1.500 14L6.500 1.500 11.500 14M3.200 9.500h6.600M14.500 0v15" /></Svg>],
    ["段落", <Svg w={14} h={16}><path d="M5 0h7.500v16H11V1.500H9V16H7.500V9H5a4.500 4.500 0 0 1 0-9z" /></Svg>],
  ],
  [
    ["段落スタイル", <Svg w={18} h={18}><path d="M11 0h6v13h-1.300V1.200h-1.600V13h-1.300V7H11a3.500 3.500 0 0 1 0-7z" /><path d="M1 8h5v5H1z" fill="none" stroke={c.icon} strokeWidth="1.400" /><path d="M4.500 11h5v5h-5z" /></Svg>],
    ["文字スタイル", <Svg w={18} h={18} stroke><path strokeWidth="1.800" d="M7.500 13L12 1.500 16.500 13M9 9h6" /><path d="M1 9.500h6v6H1z" strokeWidth="1.400" /><path d="M5 12h3v4H5z" fill={c.icon} stroke="none" /></Svg>],
  ],
];

const Lock = ({ solid }: { solid?: boolean }) => (
  <Svg w={14} h={16}>
    {solid
      ? <><path d="M0 6h13v9H0z" /><path d="M3 7V4.500a3.500 3.500 0 0 1 7 0V7" fill="none" stroke={c.icon} strokeWidth="2" /><circle cx="6.500" cy="10.500" r="1.400" fill="#444" /></>
      : <><path d="M1.500 6.500h10v7h-10zM4 6V4a2.500 2.500 0 0 1 5 0v2" fill="none" stroke={c.icon} strokeWidth="1.300" /><circle cx="6.500" cy="10" r="1.200" /></>}
  </Svg>
);

const Eye = () => (
  <Svg w={14} h={10}><path d="M7 1C3.500 1 1.200 3.500.3 5c.9 1.500 3.200 4 6.700 4s5.800-2.500 6.700-4C12.800 3.500 10.500 1 7 1z" /><circle cx="7" cy="5" r="2.700" fill="#444" /><circle cx="7.700" cy="4.300" r="1.300" /></Svg>
);

const Tabs = ({ names }: { names: string[] }) => (
  <PanelTabs role="tablist">
    {names.map((n, i) => <PanelTab key={n} role="tab" $on={i === 0}>{n}</PanelTab>)}
    <TabRest><button aria-label="パネルメニュー"><Burger /></button></TabRest>
  </PanelTabs>
);

const SidePanels = () => (
  <Panels>
    <Strip $end><Doubles /></Strip>
    <Panel $h={166}>
      <Tabs names={["カラー", "スウォッチ", "グラデーション", "パターン"]} />
      <ColourBody>
        <ColourPair>
          <Chip $color="#000" $back aria-label="背景色" />
          <Chip $color="#ff4aa8" aria-label="描画色" />
        </ColourPair>
        <Field><Svg w={8} h={8} stroke color="#fff"><path strokeWidth="1.200" d="M1 2c3 0 5 2 5 6" /></Svg></Field>
        <HuePointer><Svg w={9} h={10}><path d="M1.500 .5h3l4 4.500-4 4.500h-3z" fill="#e8e8e8" stroke="#333" strokeWidth=".8" /></Svg></HuePointer>
        <Hue />
      </ColourBody>
    </Panel>
    <Panel $h={245}>
      <Tabs names={["プロパティ", "色調補正", "CC ライブラリ"]} />
      <PropHead>
        <Pressed aria-label="シェイプ"><PathBox /></Pressed>
        <button aria-label="マスク"><MaskIcon w={20} /></button>
        <span>シェイプのプロパティ</span>
      </PropHead>
      <PropBody>
        <div>
          <Section>
            <Heading><Chevron />変形
              <Svg w={15} h={15} stroke color="#9a9a9a"><path strokeWidth="2" d="M3.500 6.500a5 5 0 1 1 6 4.500M1 14h13" /><path d="M0 5h7L3.500 10z" fill="#9a9a9a" stroke="none" /></Svg>
            </Heading>
            <TransformGrid>
              <IconButton $w={11} aria-label="縦横比を固定"><Svg w={11} h={20} stroke color="#b8b8b8"><path strokeWidth="2" d="M2 8V5a3.500 3.500 0 0 1 7 0v3M2 12v3a3.500 3.500 0 0 0 7 0v-3M5.500 6v8" /></Svg></IconButton>
              <Label htmlFor="pw">W</Label><TextField id="pw" $w={57} defaultValue="302 px" />
              <Label htmlFor="px">X</Label><TextField id="px" $w={57} defaultValue="180 px" />
              <Label htmlFor="ph">H</Label><TextField id="ph" $w={57} defaultValue="200 px" />
              <Label htmlFor="py">Y</Label><TextField id="py" $w={57} defaultValue="199 px" />
              <AngleRow>
                <Svg w={14} h={12} stroke><path strokeWidth="1.400" d="M12 2L2 10.500h11M7.500 6c2 1 2.500 2.500 2.500 4.500" /></Svg>
                <ComboBox w={68} id="ang" value="0.00°" label="角度" />
                <Spacer />
                <IconButton aria-label="左右に反転"><Svg w={20} h={16}><path d="M2 3.500v9l5-4.500z" fill="none" stroke={c.icon} strokeWidth="1.300" /><path d="M19 2.500v11L13 8z" /><path d="M10 1v15" stroke={c.icon} strokeWidth="1.500" strokeDasharray="1.500 1" /></Svg></IconButton>
                <IconButton aria-label="上下に反転"><Svg w={16} h={18}><path d="M3.500 1h9L8 5.500z" fill="none" stroke={c.icon} strokeWidth="1.300" /><path d="M2.500 17.500h11L8 12z" /><path d="M0 9h16" stroke={c.icon} strokeWidth="1.500" strokeDasharray="1.500 1" /></Svg></IconButton>
              </AngleRow>
            </TransformGrid>
          </Section>
          <Heading><Chevron />アピアランス</Heading>
        </div>
        <PropScroll><Chevron dir="up" color="#8c8c8c" /><div /><Chevron color="#8c8c8c" /></PropScroll>
      </PropBody>
    </Panel>
    <Panel>
      <Tabs names={["レイヤー", "チャンネル", "パス"]} />
      <FilterRow $h={33}>
        <Select w={130} h={23} pad={22} label="フィルターの種類" value="種類" lead={<Svg className="lead" w={11} h={11} stroke color="#fff"><circle cx="4.500" cy="4.500" r="3.300" /><path strokeWidth="2" d="M7 7l3.500 3.500" /></Svg>} />
        <Spacer />
        <IconRow $gap={10}>
          <Svg w={15} h={13}><path d="M.75.75h13.500v11H.75z" fill="none" stroke={c.icon} strokeWidth="1.500" /><path d="M3 10V7l2-2 2 2 2.500-2L12 8v2z" /></Svg>
          <HalfCircle />
          <Svg w={14} h={13}><path d="M1 0h12v4h-1.200c-.3-1.500-.6-2-2-2H8.500v8.300c0 .9.300 1.200 1.700 1.200V13H3.800v-1.500c1.400 0 1.700-.3 1.700-1.200V2H4.200c-1.400 0-1.700.5-2 2H1z" /></Svg>
          <PathBox />
          <Svg w={15} h={15}><path d="M5 6V1h5l3 3v9H9" fill="none" stroke={c.icon} strokeWidth="1.500" /><path d="M9 1v4h5zM1 7h8v8H1z" /></Svg>
        </IconRow>
        <Spacer />
        <Svg w={9} h={19}><rect width="9" height="19" rx="4.500" fill="#383838" /><circle cx="4.500" cy="4.500" r="4" fill="#e8e8e8" /></Svg>
      </FilterRow>
      <BlendRow $h={30}>
        <Select w={166} h={23} pad={8} label="描画モード" value="通常" />
        <Spacer />
        <WideLabel htmlFor="opacity">不透明度 :</WideLabel>
        <ComboBox w={61} id="opacity" value="100%" label="不透明度" />
      </BlendRow>
      <LockRow $h={33}>
        <LockLabel>ロック :</LockLabel>
        <IconRow $gap={7}>
          <Svg w={15} h={15}><path d="M.5.5h14v14H.5z" fill="none" stroke="#8d8d8d" /><path fill="#8d8d8d" d="M4 1h3.500v3.500H4zM11 1h3v3.500h-3zM1 4.500h3V8H1zM7.500 4.500H11V8H7.500zM4 8h3.500v3.500H4zM11 8h3v3.500h-3zM1 11.500h3v3H1zM7.500 11.500H11v3H7.500z" /></Svg>
          <Svg w={15} h={16} color="#a0a0a0"><path d="M15 0C11 2 8 5.500 6 9l2 2c3-3 6-7 7-11zM5 9.500C2 9.500 3 13 0 15c3 1.500 7.500 0 7.500-3.500z" /></Svg>
          <MoveIcon />
          <Svg w={16} h={15} stroke><path d="M3.500 0v15M0 3.500h9l3.500 3.500V15M0 12.500h16M9 3.500V7h3.500M12 1l3 3" strokeWidth="1.300" /></Svg>
          <Lock solid />
        </IconRow>
        <Spacer />
        <WideLabel htmlFor="fillop">塗り :</WideLabel>
        <ComboBox w={61} id="fillop" value="100%" label="塗りの不透明度" />
      </LockRow>
      <LayerList>
        <Layer $on>
          <button aria-label="表示"><Eye /></button>
          <div><Thumb $on><Svg w={16} h={16}><path d="M0 0h16v16H0z" fill="#4a4a4a" /><path fill="none" stroke={c.icon} strokeWidth="1" d="M4.500 5.500v6M11.500 5.500v6M5.500 4.500h6M5.500 12.500h6M3 3.500h2.500V6H3zM10.500 3.500H13V6h-2.500zM3 11h2.500v2.500H3zM10.500 11H13v2.500h-2.500z" /></Svg></Thumb>長方形 1</div>
        </Layer>
        <Layer>
          <button aria-label="表示"><Eye /></button>
          <div><Thumb />背景<Lock /></div>
        </Layer>
      </LayerList>
      <PanelFoot>
        <IconButton aria-label="リンク"><Link color="#858585" /></IconButton>
        <IconButton aria-label="レイヤースタイル"><Svg w={20} h={18}><path fill="none" stroke={c.icon} strokeWidth="1.800" d="M3 16c3 .5 3-3 4-8s2-6 4.500-5M4 7h6M9.500 7c2.500-.5 2.500 1.500 3 3.500s1 3 3 2.500M16 7c-3 0-3.500 6.500-7 6" /><path d="M15 16h5l-2.500 2z" fill="#fff" /></Svg></IconButton>
        <IconButton aria-label="マスクを追加"><MaskIcon /></IconButton>
        <IconButton aria-label="調整レイヤー"><Svg w={20} h={20}><circle cx="9" cy="9" r="6" fill="none" stroke={c.icon} strokeWidth="1.300" /><path d="M13.300 4.700A6 6 0 0 0 4.700 13.300z" /><path d="M15 17h5l-2.500 2z" fill="#fff" /></Svg></IconButton>
        <IconButton aria-label="グループ"><Svg w={15} h={12}><path d="M0 0h6l1.500 2H15v10H0z" /></Svg></IconButton>
        <IconButton aria-label="新規レイヤー"><Svg w={14} h={14} stroke><path d="M.75.75h12.500v12.500H.75zM7 4v6M4 7h6" /></Svg></IconButton>
        <IconButton aria-label="削除"><Svg w={14} h={15} stroke><path strokeWidth="1.300" d="M0 2.500h14M4.500 2V.7h5V2M2 3v11h10V3M5 5v7M7 5v7M9 5v7" /></Svg></IconButton>
      </PanelFoot>
    </Panel>
  </Panels>
);

const TaskbarView = () => (
  <Taskbar>
    <Weather>
      <svg width="24" height="17" viewBox="0 0 24 17" aria-hidden="true">
        <defs><linearGradient id="cl" x2="0" y2="1"><stop stopColor="#a9cbf5" /><stop offset="1" stopColor="#6d9be2" /></linearGradient></defs>
        <path fill="url(#cl)" d="M6 16a5 5 0 0 1-1-9.800 6.500 6.500 0 0 1 12.300-1A5.500 5.500 0 0 1 18.500 16z" />
        <path fill="#c3dcfa" opacity=".7" d="M1 12a5 5 0 0 1 9-4c2 0 4 1 5 3-4-1-8 1-9 4-2 0-4-1-5-3z" />
      </svg>
      <span>17°C<small>くもり</small></span>
    </Weather>
    <Apps>
      <AppButton aria-label="スタート">
        <svg width="24" height="24" viewBox="0 0 24 24" aria-hidden="true">
          <defs><linearGradient id="wn" x2="1" y2="1"><stop stopColor="#4cc6f7" /><stop offset="1" stopColor="#0669c9" /></linearGradient></defs>
          <path fill="url(#wn)" d="M0 0h11.500v11.500H0zM12.500 0H24v11.500H12.500zM0 12.500h11.500V24H0zM12.500 12.500H24V24H12.500z" />
        </svg>
      </AppButton>
      <Search>
        <Svg w={15} h={15} stroke color="#222"><circle cx="6.500" cy="6.500" r="5.300" strokeWidth="1.800" /><path strokeWidth="2" d="M10.500 10.500L14 14" /></Svg>
        <input type="search" placeholder="検索" aria-label="検索" />
        <svg width="44" height="24" viewBox="0 0 44 24" aria-hidden="true">
          <circle cx="22" cy="12" r="10.500" fill="#5a93e8" />
          <path d="M17 2.500c4-2 9-1 11 1l-2 3-3 1-1 3-4-1-3 3-2-2c0-3 1-6 4-8zM20 11l5 1 3 2-2 5-2 3-3-4zM29 6l3 5-1 3-3-2-1-3z" fill="#2f7d32" />
          <g fill="#f5b51e"><circle cx="3" cy="8" r="2.600" /><circle cx="7" cy="6" r="2.600" /><circle cx="8" cy="10" r="2.600" /><circle cx="4" cy="12" r="2.600" /><circle cx="40" cy="4.500" r="2" /><circle cx="42" cy="7" r="2" /><circle cx="38.500" cy="7.500" r="2" /><circle cx="10" cy="2" r="1.300" /></g>
          <circle cx="5.500" cy="9" r="1.600" fill="#e05a1a" /><circle cx="40.300" cy="6.300" r="1.200" fill="#e05a1a" />
          <path fill="#6aa51e" d="M3 15c5 0 8 3 8 6-4 1-8-2-8-6zM32 1c4 2 5 5 3 8-3-1-4-5-3-8zM43 14c1 5-3 8-9 7 0-4 4-6 9-7z" />
        </svg>
      </Search>
      <AppButton aria-label="タスクビュー"><Svg w={24} h={24}><path d="M0 6h18v17H0z" fill="#222" /><path d="M6 0h17v17H6z" fill="#fff" opacity=".75" /></Svg></AppButton>
      <AppButton aria-label="エクスプローラー"><Svg w={24} h={24}><path d="M0 1h9l2 2h12v6H0z" fill="#d89a17" /><path d="M0 6h9l2-2h13v18.500H0z" fill="#fccb3c" /><path d="M4 22.500V18c0-1.500 1-2.500 2.500-2.500h11c1.500 0 2.500 1 2.500 2.500v4.500z" fill="#1678ce" /></Svg></AppButton>
      <AppButton aria-label="Chrome">
        <svg width="30" height="30" viewBox="0 0 30 30" aria-hidden="true">
          <circle cx="15" cy="17" r="12" fill="#fbc116" /><path d="M15 17L4.600 11A12 12 0 0 1 25.400 11z" fill="#e33b2e" /><path d="M4.600 11A12 12 0 0 0 14 29l5.200-9.500L15 17z" fill="#2da94f" /><circle cx="15" cy="17" r="5.800" fill="#fff" /><circle cx="15" cy="17" r="4.500" fill="#3b7de8" />
          <circle cx="23" cy="8" r="7.500" fill="#a5a5a2" /><path d="M18 7h10v3H18z" fill="#ddd" /><path d="M21 8h5v1h-5z" fill="#333" />
        </svg><Running />
      </AppButton>
      <AppButton aria-label="アプリ"><Svg w={24} h={24}><ellipse cx="11" cy="12" rx="8" ry="9.800" fill="none" stroke="#2fb463" strokeWidth="4.400" /><path d="M12 8.800h12v2.200H12zM12 13.200h12v2.200H12z" fill="#2fb463" /><path d="M17.500 11h3v2.200h-3z" fill="#dfe9ea" /></Svg><Running /></AppButton>
      <AppButton $on aria-label="Photoshop"><PsLogo s={22} /><Running $on /></AppButton>
    </Apps>
    <Tray>
      <IconButton $w={14} aria-label="隠れているアイコン"><Svg w={12} h={8} stroke color="#222"><path d="M1 7l5-5 5 5" /></Svg></IconButton>
      <IconButton aria-label="入力"><Svg w={14} h={16} stroke color="#222"><path strokeWidth="1.200" d="M1 16L7 1l6 15M3 10.500h8" /></Svg></IconButton>
      <IconButton aria-label="ネットワーク"><Svg w={18} h={14} stroke color="#222"><path strokeWidth="1.300" d="M1 5.500c4.500-5 11.500-5 16 0M3.500 8c3-3.500 8-3.500 11 0M6 10.500c1.500-2 4.500-2 6 0" /><circle cx="9" cy="12" r="1.200" fill="#222" /></Svg></IconButton>
      <IconButton aria-label="音量"><Svg w={18} h={14} stroke color="#222"><path strokeWidth="1.200" d="M1 5v4h2.500L7.500 13V1L3.500 5zM10 4.500c1.300 1.500 1.300 3.500 0 5M12.500 2.500c2.500 2.500 2.500 6.500 0 9" /><path stroke="#aaa" d="M14.500 1c3.500 3.500 3.500 8.500 0 12" strokeWidth="1" /></Svg></IconButton>
      <Clock>19:11<br />2024/04/22</Clock>
      <IconButton $w={16} aria-label="通知"><Svg w={14} h={16}><path fill="#0a469c" d="M7 0c3.500 0 5 2.500 5 5v4l2 3.500H0L2 9V5c0-2.500 1.500-5 5-5zM4.500 13.500h5c-.5 2-4.500 2-5 0z" /></Svg></IconButton>
      <IconButton $w={26} $h={26} aria-label="Copilot">
        <svg width="26" height="24" viewBox="0 0 26 24" aria-hidden="true">
          <defs><linearGradient id="c1" x2="0" y2="1"><stop stopColor="#1b62d8" /><stop offset=".6" stopColor="#4fb6b0" /><stop offset="1" stopColor="#e8c52e" /></linearGradient><linearGradient id="c2" x2="1" y2="1"><stop stopColor="#b067e8" /><stop offset="1" stopColor="#f0673f" /></linearGradient></defs>
          <path fill="url(#c1)" d="M6 1h10c3 0 3 2 4 5h-6l-4 10H4c-3 0-4-2-3-5z" /><path fill="url(#c2)" d="M16 7h5c3 0 4 2 3 5l-2 5H10z" />
          <rect x="6" y="15" width="19" height="9" rx="2" fill="#f9c513" />
          <text x="15.500" y="22" textAnchor="middle" fontFamily="Open Sans, sans-serif" fontSize="7" fontWeight="700" fill="#222">PRE</text>
        </svg>
      </IconButton>
    </Tray>
  </Taskbar>
);

export default function App() {
  return (
    <Page>
      <Global />
      <MenuBar>
        <PsLogo s={17} />
        <Menus>{menus.map((m) => <MenuItem key={m}>{m}</MenuItem>)}</Menus>
        <WindowButtons>
          <WindowButton aria-label="最小化"><Svg w={10} h={2}><path d="M0 0h10v1H0z" fill="#fff" /></Svg></WindowButton>
          <WindowButton aria-label="元に戻す"><Svg w={11} h={11} stroke color="#fff"><path strokeWidth="1.100" d="M1 3h7v7H1zM3 1h5.500c1 0 1.500.5 1.500 1.500V8" /></Svg></WindowButton>
          <WindowButton aria-label="閉じる"><Close s={11} /></WindowButton>
        </WindowButtons>
      </MenuBar>
      <Options />
      <Workspace>
        <ToolPanel />
        <Document />
        <Dock>
          <Strip $end><Doubles left /></Strip>
          {dock.map((group, i) => (
            <DockGroup key={i}>
              <Grip />
              {group.map(([name, art]) => <button key={name} aria-label={name}>{art}</button>)}
            </DockGroup>
          ))}
        </Dock>
        <SidePanels />
      </Workspace>
      <TaskbarView />
    </Page>
  );
}
